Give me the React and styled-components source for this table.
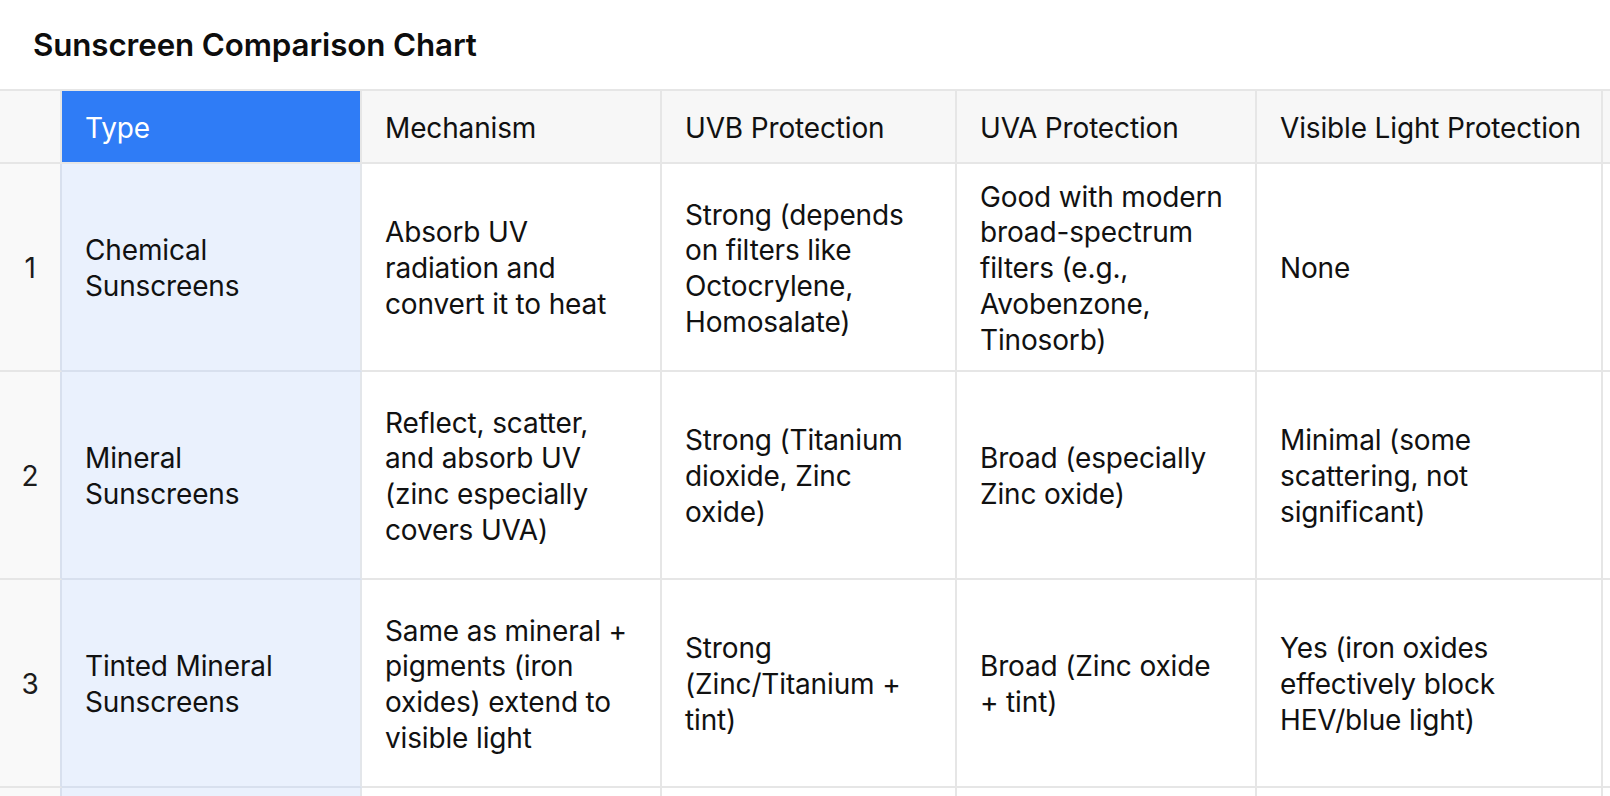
import React from "react";
import styled, { createGlobalStyle, css } from "styled-components";

const GlobalStyle = createGlobalStyle`
  html, body {
    margin: 0;
    padding: 0;
    background: #ffffff;
    overflow: hidden;
  }
  body {
    font-family: Inter, "Noto Sans", "Liberation Sans", sans-serif;
    color: #111111;
    -webkit-font-smoothing: antialiased;
  }
`;

const Page = styled.div`
  height: 100vh;
  overflow: hidden;
  display: flex;
  flex-direction: column;
`;

const TitleBar = styled.header`
  flex: 0 0 89px;
  display: flex;
  align-items: center;
  padding-left: 33px;
`;

const Title = styled.h1`
  margin: 0;
  font-size: 31.3px;
  font-weight: 600;
  letter-spacing: -0.1px;
  color: #0d0d0d;
`;

const Sheet = styled.div`
  display: grid;
  grid-template-columns: 62px 300px 300px 295px 300px 346px 320px;
  grid-auto-rows: auto;
  width: max-content;
`;

const BORDER = "#e6e6e6";
const TYPE_BORDER = "#d8e0ee";

const HeadCell = styled.div`
  box-sizing: border-box;
  height: 75px;
  border-top: 2px solid ${BORDER};
  border-bottom: 2px solid ${BORDER};
  border-right: 2px solid ${BORDER};
  background: #f7f7f7;
  display: flex;
  align-items: center;
  padding: 2px 24px 0 23px;
  font-size: 28px;
  line-height: 36px;
  letter-spacing: -0.15px;
  white-space: nowrap;
  color: #111111;
  ${(p) =>
    p.$active &&
    css`
      background: #2f7cf6;
      color: #ffffff;
    `}
  ${(p) =>
    p.$index &&
    css`
      background: #f8f8f8;
    `}
`;

const Cell = styled.div`
  box-sizing: border-box;
  height: 208px;
  border-bottom: 2px solid ${BORDER};
  border-right: 2px solid ${BORDER};
  background: #ffffff;
  display: flex;
  flex-direction: column;
  justify-content: center;
  padding: 4px 24px 0 23px;
  font-size: 28px;
  line-height: 35.7px;
  letter-spacing: -0.15px;
  color: #111111;
  ${(p) =>
    p.$kind === "index" &&
    css`
      background: #f9f9f9;
      border-right-color: ${TYPE_BORDER};
      align-items: center;
      padding: 4px 0 0;
      color: #1c1c1c;
    `}
  ${(p) =>
    p.$kind === "type" &&
    css`
      background: #eaf1fd;
      border-bottom-color: ${TYPE_BORDER};
      border-right-color: #e3e6ea;
    `}
`;

const Line = styled.span`
  display: block;
  white-space: nowrap;
`;

const headers = [
  "Type",
  "Mechanism",
  "UVB Protection",
  "UVA Protection",
  "Visible Light Protection",
  "",
];

const rows = [
  [
    ["Chemical", "Sunscreens"],
    ["Absorb UV", "radiation and", "convert it to heat"],
    ["Strong (depends", "on filters like", "Octocrylene,", "Homosalate)"],
    ["Good with modern", "broad-spectrum", "filters (e.g.,", "Avobenzone,", "Tinosorb)"],
    ["None"],
    [],
  ],
  [
    ["Mineral", "Sunscreens"],
    ["Reflect, scatter,", "and absorb UV", "(zinc especially", "covers UVA)"],
    ["Strong (Titanium", "dioxide, Zinc", "oxide)"],
    ["Broad (especially", "Zinc oxide)"],
    ["Minimal (some", "scattering, not", "significant)"],
    [],
  ],
  [
    ["Tinted Mineral", "Sunscreens"],
    ["Same as mineral +", "pigments (iron", "oxides) extend to", "visible light"],
    ["Strong", "(Zinc/Titanium +", "tint)"],
    ["Broad (Zinc oxide", "+ tint)"],
    ["Yes (iron oxides", "effectively block", "HEV/blue light)"],
    [],
  ],
  [[], [], [], [], [], []],
];

function Lines({ items }) {
  return items.map((t, i) => <Line key={i}>{t}</Line>);
}

export default function App() {
  return (
    <>
      <GlobalStyle />
      <Page>
        <TitleBar>
          <Title>Sunscreen Comparison Chart</Title>
        </TitleBar>
        <Sheet>
          <HeadCell $index />
          {headers.map((h, i) => (
            <HeadCell key={i} $active={i === 0}>
              {h}
            </HeadCell>
          ))}
          {rows.map((row, r) => (
            <React.Fragment key={r}>
              <Cell $kind="index">{r < 3 ? r + 1 : ""}</Cell>
              {row.map((lines, c) => (
                <Cell key={c} $kind={c === 0 ? "type" : "plain"}>
                  <Lines items={lines} />
                </Cell>
              ))}
            </React.Fragment>
          ))}
        </Sheet>
      </Page>
    </>
  );
}
